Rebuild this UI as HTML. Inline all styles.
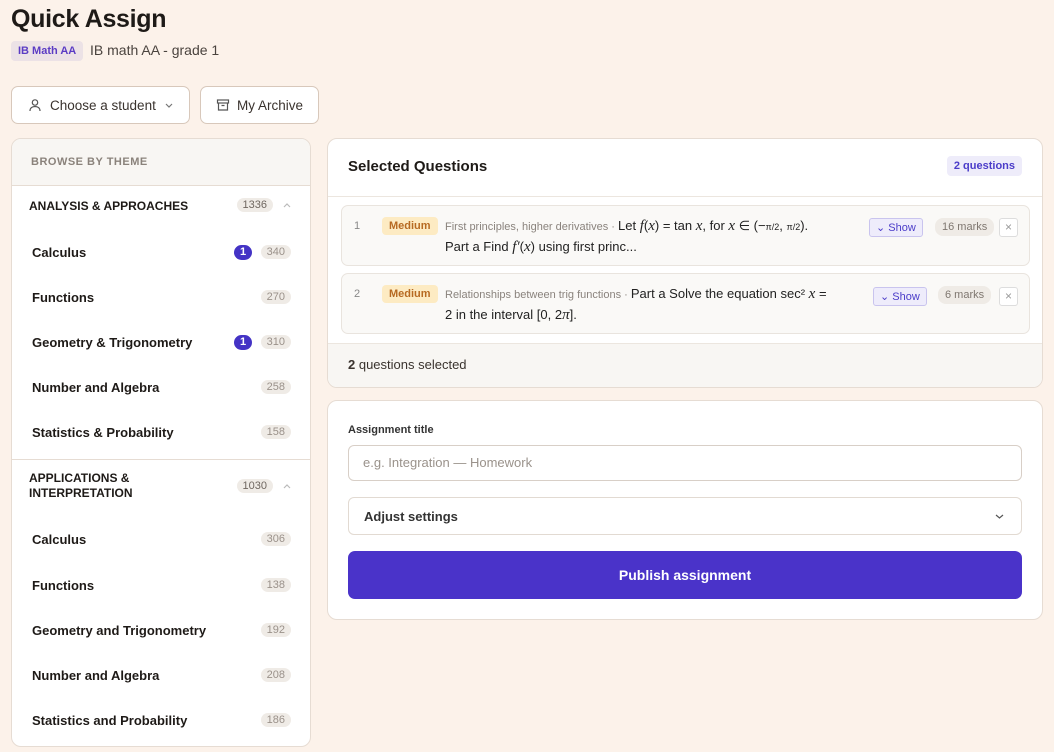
<!DOCTYPE html>
<html><head><meta charset="utf-8"><style>
*{box-sizing:border-box;margin:0;padding:0}
body{width:1054px;height:752px;background:#fcf2ea;font-family:"Liberation Sans",sans-serif;color:#1e1a17;position:relative;overflow:hidden}
.abs{position:absolute}
h1{position:absolute;left:11px;top:5px;font-size:25px;font-weight:700;letter-spacing:-0.3px}
.tag{position:absolute;left:11px;top:41px;height:20px;padding:0 7px;background:#ece2e6;color:#5b3cc4;font-size:11px;font-weight:700;border-radius:4px;line-height:20px}
.btn{position:absolute;top:86px;height:38px;background:#fff;border:1px solid #d8c8bb;border-radius:7px;font-size:13.5px;display:flex;align-items:center;color:#3a332e}
.card{position:absolute;background:#fff;border:1px solid #e6dcd3;border-radius:10px;overflow:hidden}
.row{position:absolute;left:0;right:0;display:flex;align-items:center;font-size:13px;font-weight:700}
.cnt{position:absolute;right:19px;background:#efebe6;color:#9a918a;font-size:11px;border-radius:9px;padding:1px 6px;font-weight:400}
.one{position:absolute;right:58px;background:#4433c5;color:#fff;font-size:11px;border-radius:9px;width:18px;height:15px;text-align:center;line-height:15px;font-weight:700}
.q{position:absolute;left:13px;right:12px;background:#faf9f7;border:1px solid #e9e4de;border-radius:7px}
.med{position:absolute;left:40px;background:#fdebc3;color:#b76a22;font-size:11px;font-weight:700;padding:3px 7px;border-radius:4px}
.show{position:absolute;border:1px solid #c9c4ee;background:#eeecfb;color:#4b3cc9;font-size:11px;border-radius:3px;padding:2px 6px}
.marks{position:absolute;background:#efebe6;color:#7f7770;font-size:11px;border-radius:8px;padding:3px 7px}
.x{position:absolute;width:19px;height:19px;border:1px solid #ddd;border-radius:3px;color:#999;font-size:12px;text-align:center;line-height:17px;background:#fff}
.qt{position:absolute;left:103px;font-size:13px;line-height:19px;color:#222;width:420px}
.qt small{font-size:11px;color:#8a837d}
i{font-family:"Liberation Serif",serif;font-size:15px}
.chev{position:absolute;right:19px}
</style></head><body>
<h1>Quick Assign</h1>
<div class="tag">IB Math AA</div>
<div class="abs" style="left:90px;top:42px;font-size:14px;color:#4a433e">IB math AA - grade 1</div>
<div class="btn" style="left:11px;width:179px;padding-left:16px"><svg width="14" height="14" viewBox="0 0 14 14" fill="none" stroke="#555" stroke-width="1.2"><circle cx="7" cy="4.5" r="2.7"/><path d="M2 13c0-3 2.2-4.5 5-4.5s5 1.5 5 4.5"/></svg><span style="margin-left:8px">Choose a student</span><svg style="margin-left:9px" width="8" height="5" viewBox="0 0 8 5" fill="none" stroke="#777" stroke-width="1.2"><path d="M1 1l3 3 3-3"/></svg></div>
<div class="btn" style="left:200px;width:119px;padding-left:15px"><svg width="14" height="14" viewBox="0 0 14 14" fill="none" stroke="#555" stroke-width="1.2"><rect x="1.5" y="2" width="11" height="3"/><path d="M2.5 5v7h9V5M5.5 7.5h3"/></svg><span style="margin-left:7px">My Archive</span></div>

<div class="card" style="left:11px;top:138px;width:300px;height:609px">
 <div class="abs" style="left:0;top:0;right:0;height:47px;background:#f8f6f3;border-bottom:1px solid #e6dcd3"></div>
 <div class="abs" style="left:19px;top:17px;font-size:11px;font-weight:700;color:#8a827b;letter-spacing:.5px">BROWSE BY THEME</div>
 <div class="row" style="top:58px;height:18px;left:17px;font-size:12px">ANALYSIS &amp; APPROACHES</div>
 <span class="cnt" style="top:59px;right:37px;color:#6f6760">1336</span><svg class="chev" style="top:64px" width="8" height="5" viewBox="0 0 8 5" fill="none" stroke="#bbb" stroke-width="1.2"><path d="M1 4l3-3 3 3"/></svg>
 <div class="row" style="top:104px;left:20px;height:18px">Calculus</div><span class="one" style="top:106px">1</span><span class="cnt" style="top:106px">340</span>
 <div class="row" style="top:149px;left:20px;height:18px">Functions</div><span class="cnt" style="top:151px">270</span>
 <div class="row" style="top:194px;left:20px;height:18px">Geometry &amp; Trigonometry</div><span class="one" style="top:196px">1</span><span class="cnt" style="top:196px">310</span>
 <div class="row" style="top:239px;left:20px;height:18px">Number and Algebra</div><span class="cnt" style="top:241px">258</span>
 <div class="row" style="top:284px;left:20px;height:18px">Statistics &amp; Probability</div><span class="cnt" style="top:286px">158</span>
 <div class="abs" style="left:0;right:0;top:320px;border-top:1px solid #e6dcd3"></div>
 <div class="abs" style="top:332px;left:17px;font-size:12px;font-weight:700;line-height:15px">APPLICATIONS &amp;<br>INTERPRETATION</div>
 <span class="cnt" style="top:340px;right:37px;color:#6f6760">1030</span><svg class="chev" style="top:345px" width="8" height="5" viewBox="0 0 8 5" fill="none" stroke="#bbb" stroke-width="1.2"><path d="M1 4l3-3 3 3"/></svg>
 <div class="row" style="top:391px;left:20px;height:18px">Calculus</div><span class="cnt" style="top:393px">306</span>
 <div class="row" style="top:437px;left:20px;height:18px">Functions</div><span class="cnt" style="top:439px">138</span>
 <div class="row" style="top:482px;left:20px;height:18px">Geometry and Trigonometry</div><span class="cnt" style="top:484px">192</span>
 <div class="row" style="top:527px;left:20px;height:18px">Number and Algebra</div><span class="cnt" style="top:529px">208</span>
 <div class="row" style="top:572px;left:20px;height:18px">Statistics and Probability</div><span class="cnt" style="top:574px">186</span>
</div>

<div class="card" style="left:327px;top:138px;width:716px;height:250px">
 <div class="abs" style="left:20px;top:19px;font-size:15px;font-weight:700">Selected Questions</div>
 <div class="abs" style="right:20px;top:17px;background:#eeecfa;color:#4b3cc9;font-size:11px;font-weight:700;padding:4px 7px;border-radius:4px">2 questions</div>
 <div class="abs" style="left:0;right:0;top:57px;border-top:1px solid #ece6df"></div>
 <div class="q" style="top:66px;height:61px">
  <span class="abs" style="left:12px;top:14px;font-size:11px;color:#888">1</span>
  <span class="med" style="top:11px">Medium</span>
  <div class="qt" style="top:10px"><small>First principles, higher derivatives · </small>Let <i>f</i>(<i>x</i>) = tan <i>x</i>, for <i>x</i> ∈ (−<span style="font-size:9px">π/2</span>, <span style="font-size:9px">π/2</span>).<br>Part a Find <i>f′</i>(<i>x</i>) using first princ...</div>
  <span class="show" style="left:527px;top:12px">⌄ Show</span><span class="marks" style="left:593px;top:12px">16 marks</span><span class="x" style="left:657px;top:12px">×</span>
 </div>
 <div class="q" style="top:134px;height:61px">
  <span class="abs" style="left:12px;top:14px;font-size:11px;color:#888">2</span>
  <span class="med" style="top:11px">Medium</span>
  <div class="qt" style="top:10px"><small>Relationships between trig functions · </small>Part a Solve the equation sec² <i>x</i> =<br>2 in the interval [0, 2<i>π</i>].</div>
  <span class="show" style="left:531px;top:13px">⌄ Show</span><span class="marks" style="left:596px;top:12px">6 marks</span><span class="x" style="left:657px;top:13px">×</span>
 </div>
 <div class="abs" style="left:0;right:0;top:204px;bottom:0;background:#f8f6f3;border-top:1px solid #ece6df"></div>
 <div class="abs" style="left:20px;top:218px;font-size:13px;color:#3a332e"><b>2</b> questions selected</div>
</div>

<div class="card" style="left:327px;top:400px;width:716px;height:220px">
 <div class="abs" style="left:20px;top:23px;font-size:11px;font-weight:700;color:#333">Assignment title</div>
 <div class="abs" style="left:20px;top:44px;width:674px;height:36px;border:1px solid #d8cfc7;border-radius:6px;padding:9px 14px;font-size:13px;color:#9a928b">e.g. Integration — Homework</div>
 <div class="abs" style="left:20px;top:96px;width:674px;height:38px;border:1px solid #e2dad2;border-radius:6px;padding:11px 15px;font-size:13px;font-weight:700;color:#333">Adjust settings<svg style="position:absolute;right:17px;top:16px" width="9" height="5" viewBox="0 0 9 5" fill="none" stroke="#555" stroke-width="1.2"><path d="M1 1l3.5 3 3.5-3"/></svg></div>
 <div class="abs" style="left:20px;top:150px;width:674px;height:48px;background:#4a33c9;border-radius:7px;color:#fff;font-size:14px;font-weight:700;text-align:center;line-height:48px">Publish assignment</div>
</div>
</body></html>
